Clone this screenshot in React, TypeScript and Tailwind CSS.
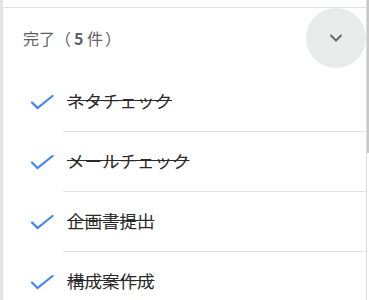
import { ChevronDown } from 'lucide-react';

const items = ['ネタチェック', 'メールチェック', '企画書提出', '構成案作成'];

const CheckMark = () => (
  <svg width="24" height="16" viewBox="0 0 24 16" className="block">
    <path d="M2 8.5 L7.5 14 L22.5 2" fill="none" stroke="#4285f4" strokeWidth="2.2" strokeLinecap="round" />
  </svg>
);

const App = () => {
  return (
    <div
      className="relative flex w-[369px] h-[300px] overflow-hidden bg-white"
      style={{ fontFamily: '"Noto Sans CJK JP", "Noto Sans", Roboto, sans-serif' }}
    >
      {/* left edge */}
      <div className="w-[3px] shrink-0 bg-[#e4e4e4]" />

      <div className="flex flex-col w-[364px] shrink-0 border-r border-[#dadce0]">
        {/* end of previous section */}
        <div className="h-[8px] shrink-0 border-b border-[#e0e0e0]" />

        {/* Completed header */}
        <div className="flex items-center h-[60px] shrink-0">
          <span className="pl-[20px] text-[16px] text-[#5f6368]">
            完了（<span className="font-bold ml-[3px]">5</span> 件<span className="ml-[2px]">）</span>
          </span>
          <button className="ml-auto flex items-center justify-center w-[60px] h-[60px] rounded-full bg-[#e9eaea]">
            <ChevronDown className="w-[20px] h-[20px] text-[#5f6368]" strokeWidth={2.2} />
          </button>
        </div>

        {/* Completed tasks */}
        <div className="pt-[4px] flex flex-col">
          {items.map((item) => (
            <div key={item} className="flex h-[60px] shrink-0">
              <div className="w-[60px] shrink-0 flex items-center pl-[27px]">
                <CheckMark />
              </div>
              <div className="flex-1 flex items-center pl-[4px] border-b border-[#e0e0e0]">
                <span className="text-[17.5px] text-[#2a2a2a] line-through">{item}</span>
              </div>
            </div>
          ))}
        </div>
      </div>

      {/* scrollbar thumb */}
      <div className="absolute right-0 top-0 w-[2px] h-[153px] bg-[#c8c8c8]" />
    </div>
  );
};

export default App;
